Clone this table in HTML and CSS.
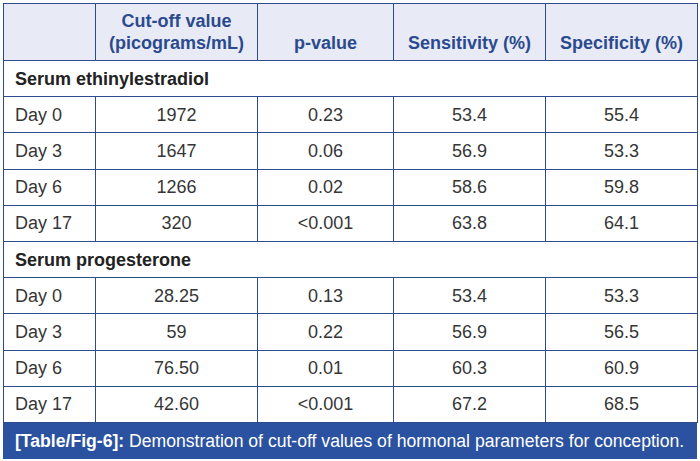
FILE: index.html
```html
<!DOCTYPE html>
<html>
<head>
<meta charset="utf-8">
<link rel="stylesheet" href="styles.css">
</head>
<body>
<div class="figure">
  <table class="data">
    <colgroup>
      <col class="c1"><col class="c2"><col class="c3"><col class="c4"><col class="c5">
    </colgroup>
    <thead>
      <tr class="head">
        <th></th>
        <th>Cut-off value<br>(picograms/mL)</th>
        <th>p-value</th>
        <th>Sensitivity (%)</th>
        <th>Specificity (%)</th>
      </tr>
    </thead>
    <tbody>
      <tr class="section"><td colspan="5">Serum ethinylestradiol</td></tr>
      <tr><td>Day 0</td><td>1972</td><td>0.23</td><td>53.4</td><td>55.4</td></tr>
      <tr><td>Day 3</td><td>1647</td><td>0.06</td><td>56.9</td><td>53.3</td></tr>
      <tr><td>Day 6</td><td>1266</td><td>0.02</td><td>58.6</td><td>59.8</td></tr>
      <tr><td>Day 17</td><td>320</td><td>&lt;0.001</td><td>63.8</td><td>64.1</td></tr>
      <tr class="section"><td colspan="5">Serum progesterone</td></tr>
      <tr><td>Day 0</td><td>28.25</td><td>0.13</td><td>53.4</td><td>53.3</td></tr>
      <tr><td>Day 3</td><td>59</td><td>0.22</td><td>56.9</td><td>56.5</td></tr>
      <tr><td>Day 6</td><td>76.50</td><td>0.01</td><td>60.3</td><td>60.9</td></tr>
      <tr><td>Day 17</td><td>42.60</td><td>&lt;0.001</td><td>67.2</td><td>68.5</td></tr>
    </tbody>
  </table>
  <div class="caption"><b>[Table/Fig-6]:</b> Demonstration of cut-off values of hormonal parameters for conception.</div>
</div>
</body>
</html>
```
FILE: styles.css
```css
html, body {
  margin: 0;
  padding: 0;
  background: #ffffff;
}
body {
  padding: 3px 3px 0 3px;
  font-family: "Liberation Sans", Arial, sans-serif;
}
.figure {
  width: 694px;
}
.data {
  width: 694px;
  border-collapse: collapse;
  table-layout: fixed;
  color: #363636;
  font-size: 18px;
}
.c1 { width: 92px; }
.c2 { width: 162px; }
.c3 { width: 136px; }
.c4 { width: 152px; }
.c5 { width: 152px; }
.data th, .data td {
  border: 1px solid #2c4c8c;
  padding: 0;
}
.head th {
  height: 57px;
  background: #e8ebf6;
  color: #2b4a8e;
  font-weight: bold;
  line-height: 22px;
  vertical-align: bottom;
  padding-bottom: 6px;
  box-sizing: border-box;
  text-align: center;
}
.data tbody tr {
  height: 36.2px;
}
.data tbody td {
  text-align: center;
  vertical-align: middle;
  line-height: 20px;
}
.data tbody td:first-child {
  text-align: left;
  padding-left: 11px;
}
.section td {
  font-weight: bold;
  color: #222222;
}
.caption {
  height: 36px;
  background: #2a52a0;
  color: #ffffff;
  font-size: 17.6px;
  line-height: 36px;
  padding-left: 12px;
  white-space: nowrap;
}
```
